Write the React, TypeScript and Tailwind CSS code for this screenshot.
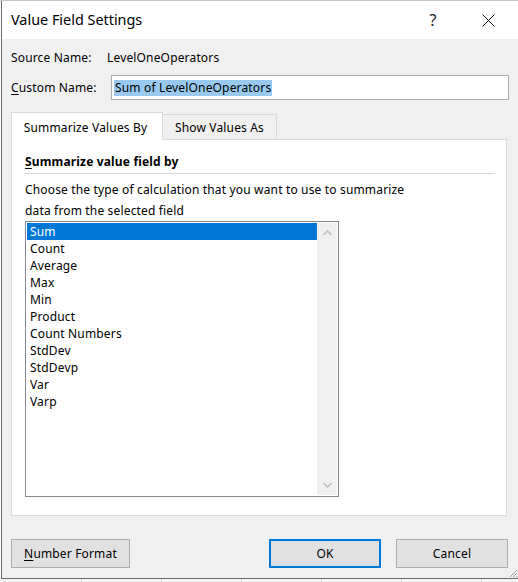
import { useState } from "react";

const items = [
  "Sum",
  "Count",
  "Average",
  "Max",
  "Min",
  "Product",
  "Count Numbers",
  "StdDev",
  "StdDevp",
  "Var",
  "Varp",
];

const font = "font-['Segoe_UI','Noto_Sans',sans-serif]";

export default function App() {
  const [selected, setSelected] = useState("Sum");

  return (
    <div className={`w-[518px] h-[582px] bg-[#f3f3f3] flex flex-col overflow-hidden text-black ${font}`}>
      {/* sheet behind, top edge */}
      <div className="h-px shrink-0 bg-[#c6c6c6]" />

      <div className="flex h-[578px] shrink-0">
        <div className="w-px bg-white" />

        {/* Dialog */}
        <div className="w-[517px] flex flex-col border-l border-b border-[#6b6b6b] bg-[#f0f0f0] relative">
          {/* Title bar */}
          <div className="h-[38px] shrink-0 bg-white flex items-center pl-[9px]">
            <span className="text-[14.4px] leading-none">Value Field Settings</span>
            <span className="ml-auto mr-[18px] w-[20px] text-center text-[16px] leading-none text-[#222]">?</span>
            <div className="w-[57px] flex justify-center pr-[2px]">
              <svg width="13" height="13" viewBox="0 0 13 13">
                <path d="M0.5 0.5 L12.5 12.5 M12.5 0.5 L0.5 12.5" stroke="#111" strokeWidth="1" />
              </svg>
            </div>
          </div>

          {/* Body */}
          <div className="flex-1 flex flex-col pl-[9px] pt-[9px] text-[12px] tracking-[0.16px]">
            <div className="h-[18px] flex items-center pt-px">
              <span className="w-[96px]">Source Name:</span>
              <span>LevelOneOperators</span>
            </div>

            <div className="h-[25px] mt-[9px] flex items-center">
              <span className="w-[100px] pt-px">
                <span className="underline underline-offset-2">C</span>ustom Name:
              </span>
              <div className="w-[398px] h-[25px] border border-[#adadad] bg-white flex items-center pl-[2px]">
                <span className="bg-[#99c9ef] h-[16px] leading-[16px] px-px">Sum of LevelOneOperators</span>
              </div>
            </div>

            {/* Tabs */}
            <div className="flex mt-[12px] h-[27px] items-start relative z-10">
              <div className="w-[152px] h-[28px] bg-white border border-b-0 border-[#d9d9d9] flex items-center justify-center pt-[3px] pr-[3px]">
                Summarize Values By
              </div>
              <div className="w-[114px] h-[25px] mt-[2px] border-t border-r border-[#d9d9d9] flex items-center justify-center pt-[2px]">
                Show Values As
              </div>
            </div>

            {/* Tab panel */}
            <div className="w-[496px] h-[377px] bg-white border border-[#d9d9d9] pl-[13px] pt-[13px] flex flex-col">
              <div className="h-[17px] flex items-center font-bold pt-px">
                <span className="underline underline-offset-2">S</span>ummarize value field by
              </div>
              <div className="mt-[3px] h-px w-[470px] bg-[#d5d5d5]" />
              <p className="mt-[4px] pt-px leading-[21px]">
                Choose the type of calculation that you want to use to summarize
                <br />
                data from the selected field
              </p>

              {/* Listbox */}
              <div className="w-[314px] h-[276px] border border-[#828790] p-px flex">
                <div className="w-[290px] flex flex-col">
                  {items.map((it) => (
                    <div
                      key={it}
                      onClick={() => setSelected(it)}
                      className={`h-[17px] leading-[18px] pl-[3px] cursor-default ${
                        selected === it ? "bg-[#0078d7] text-white" : ""
                      }`}
                    >
                      {it}
                    </div>
                  ))}
                </div>
                <div className="w-[20px] bg-[#f0f0f0] flex flex-col items-center justify-between py-[7px]">
                  <svg width="9" height="6" viewBox="0 0 9 6">
                    <path d="M0.5 5 L4.5 1 L8.5 5" fill="none" stroke="#c1c1c1" strokeWidth="1.6" />
                  </svg>
                  <svg width="9" height="6" viewBox="0 0 9 6">
                    <path d="M0.5 1 L4.5 5 L8.5 1" fill="none" stroke="#c1c1c1" strokeWidth="1.6" />
                  </svg>
                </div>
              </div>
            </div>

            {/* Buttons */}
            <div className="flex mt-[23px] h-[29px]">
              <button className="w-[119px] h-[29px] bg-[#e1e1e1] border border-[#adadad]">
                <span className="underline underline-offset-2">N</span>umber Format
              </button>
              <button className="ml-auto w-[112px] h-[29px] bg-[#e1e1e1] border-2 border-[#0078d7]">
                OK
              </button>
              <button className="ml-[15px] mr-[10px] w-[112px] h-[29px] bg-[#e1e1e1] border border-[#adadad]">
                Cancel
              </button>
            </div>
          </div>

          {/* Resize grip */}
          <svg className="absolute right-0 bottom-0" width="10" height="10" viewBox="0 0 10 10">
            <path d="M9 2 L2 9 M9 5 L5 9 M9 8 L8 9" stroke="#a0a0a0" strokeWidth="1" />
          </svg>
        </div>
      </div>

      {/* sheet behind, bottom edge */}
      <div className="flex-1 flex">
        {[0, 1, 2, 3, 4, 5].map((i) => (
          <div key={i} className="w-[80px] shrink-0 border-r border-[#d4d4d4] first:w-[82px]" />
        ))}
      </div>
    </div>
  );
}
